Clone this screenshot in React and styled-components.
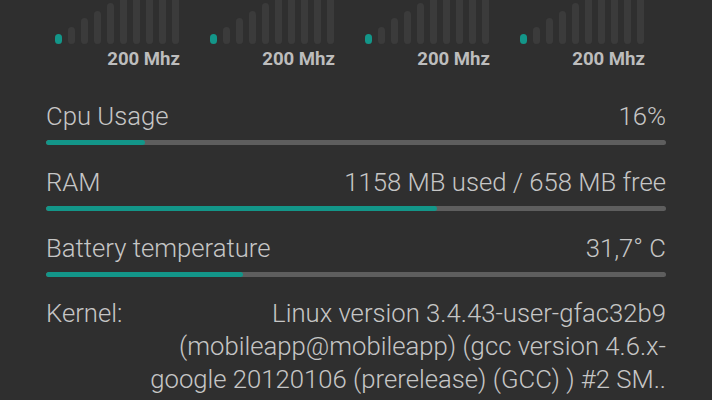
import React from 'react'
import styled, { createGlobalStyle } from 'styled-components'

const GlobalStyle = createGlobalStyle`
  html, body {
    margin: 0;
    padding: 0;
    background: #2f2f2f;
  }
  body {
    font-family: Roboto, "Noto Sans", "Liberation Sans", sans-serif;
    overflow: hidden;
  }
`

const Page = styled.div`
  width: 712px;
  height: 400px;
  box-sizing: border-box;
  padding: 0 46px;
  background: #2f2f2f;
  color: #c6c6c6;
  overflow: hidden;
`

const FreqRow = styled.div`
  display: grid;
  grid-template-columns: repeat(4, 155px);
`

const FreqGroup = styled.div`
  display: flex;
  flex-direction: column;
  align-items: flex-end;
  width: fit-content;
  padding-left: 9px;
`

const Bars = styled.div`
  display: flex;
  align-items: flex-end;
  gap: 6px;
  height: 44px;
  overflow: hidden;
`

const Bar = styled.div`
  width: 7px;
  height: ${({ $h }) => $h}px;
  border-radius: 4px;
  background: ${({ $active }) => ($active ? '#139689' : '#3b3b3b')};
`

const FreqLabel = styled.div`
  margin-top: 4px;
  margin-right: -1px;
  font-size: 18.6px;
  line-height: 22px;
  font-weight: 700;
  color: #bdbdbd;
`

const Stats = styled.div`
  display: flex;
  flex-direction: column;
  gap: 22px;
  margin-top: 31px;
`

const Stat = styled.div`
  display: flex;
  flex-direction: column;
  gap: 9px;
`

const Header = styled.div`
  display: flex;
  justify-content: space-between;
  font-size: 25.7px;
  line-height: 30px;
  font-weight: 300;
`

const Track = styled.div`
  height: 5px;
  border-radius: 3px;
  background: #5e5e5e;
  overflow: hidden;
`

const Fill = styled.div`
  height: 100%;
  border-radius: 3px;
  background: #139689;
`

const Kernel = styled.div`
  display: flex;
  justify-content: space-between;
  margin-top: 20px;
  font-size: 25.7px;
  line-height: 33px;
  font-weight: 300;
`

const KernelText = styled.div`
  display: flex;
  flex-direction: column;
  align-items: flex-end;
  white-space: nowrap;
`

const cores = ['200 Mhz', '200 Mhz', '200 Mhz', '200 Mhz']
const heights = [10, 17, 26, 33, 41, 50, 58, 66, 74, 82]

const stats = [
  { label: 'Cpu Usage', value: '16%', pct: 16 },
  { label: 'RAM', value: '1158 MB used / 658 MB free', pct: 63 },
  { label: 'Battery temperature', value: '31,7° C', pct: 31.8 }
]

const kernel = [
  'Linux version 3.4.43-user-gfac32b9',
  '(mobileapp@mobileapp) (gcc version 4.6.x-',
  'google 20120106 (prerelease) (GCC) ) #2 SM..'
]

export default function App() {
  return (
    <>
      <GlobalStyle />
      <Page>
        <FreqRow>
          {cores.map((freq, i) => (
            <FreqGroup key={i}>
              <Bars>
                {heights.map((h, j) => (
                  <Bar key={j} $h={h} $active={j === 0} />
                ))}
              </Bars>
              <FreqLabel>{freq}</FreqLabel>
            </FreqGroup>
          ))}
        </FreqRow>
        <Stats>
          {stats.map((s) => (
            <Stat key={s.label}>
              <Header>
                <span>{s.label}</span>
                <span>{s.value}</span>
              </Header>
              <Track>
                <Fill style={{ width: `${s.pct}%` }} />
              </Track>
            </Stat>
          ))}
        </Stats>
        <Kernel>
          <span>Kernel:</span>
          <KernelText>
            {kernel.map((line) => (
              <span key={line}>{line}</span>
            ))}
          </KernelText>
        </Kernel>
      </Page>
    </>
  )
}
